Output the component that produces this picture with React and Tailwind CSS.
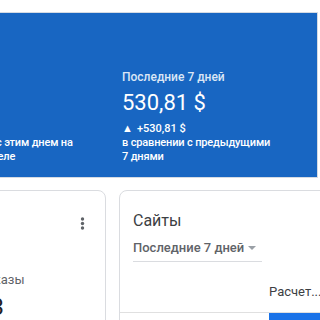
import React from 'react';

// Сводка доходов: синяя панель с периодами + карточки ниже
const FONT = { fontFamily: 'Roboto, "Noto Sans", Arial, sans-serif' };

function Period({ label, value, delta, note }) {
  return (
    <div className="w-[160px] shrink-0 pt-[56px] text-white">
      <div className="text-[12px] leading-[16px] font-medium text-[#dbe6f6]">{label}</div>
      <div className="mt-[4px] text-[22px] leading-[28px]">{value}</div>
      <div className="mt-[5px] text-[11px] leading-[14px] font-medium flex items-center gap-[4px]">
        <span className="text-[11px]">▲</span>
        <span>{delta}</span>
      </div>
      <div className="text-[11px] leading-[13.5px] font-medium tracking-[-0.15px] whitespace-nowrap">
        {note[0]}
        <br />
        {note[1]}
      </div>
    </div>
  );
}

function MoreIcon() {
  return (
    <svg width="5" height="13" viewBox="0 0 5 13" className="text-[#5f6368]">
      <circle cx="2.5" cy="2" r="1.7" fill="currentColor" />
      <circle cx="2.5" cy="6.5" r="1.7" fill="currentColor" />
      <circle cx="2.5" cy="11" r="1.7" fill="currentColor" />
    </svg>
  );
}

export default function App() {
  return (
    <div className="w-[320px] h-[320px] overflow-hidden bg-white pt-[12px]" style={FONT}>
      {/* синяя панель */}
      <div className="w-[318px] h-[166px] bg-[#1866c2] border border-l-0 border-[#d5dbe3] overflow-hidden">
        <div className="flex gap-[31px] -ml-[69px]">
          <Period label="Вчера" value="0,00 $" delta="+0,00 $" note={['в сравнении с этим днем на', 'прошлой неделе']} />
          <Period label="Последние 7 дней" value="530,81 $" delta="+530,81 $" note={['в сравнении с предыдущими', '7 днями']} />
        </div>
      </div>

      {/* карточки */}
      <div className="flex gap-[13px] mt-[12px]">
        <div className="w-[200px] h-[160px] shrink-0 -ml-[94px] border border-[#dadce0] rounded-lg">
          <div className="flex justify-end pr-[20px] pt-[26px]">
            <MoreIcon />
          </div>
          <div className="pl-[70px] pt-[42px]">
            <div className="text-[13px] leading-[16px] text-[#5f6368]">Показы</div>
            <div className="mt-[5px] text-[24px] leading-[28px] text-[#202124]">83</div>
          </div>
        </div>

        <div className="w-[300px] h-[160px] shrink-0 border border-[#dadce0] rounded-lg overflow-hidden">
          <div className="pl-[13px] pt-[20px]">
            <div className="text-[16px] leading-[20px] text-[#3c4043]">Сайты</div>
            <div className="mt-[9px] w-[129px] h-[22px] border-b border-[#dadce0] flex items-start justify-between pr-[6px]">
              <span className="text-[13px] leading-[16px] font-medium text-[#5f6368]">Последние 7 дней</span>
              <span className="mt-[6px] w-0 h-0 border-l-[4px] border-r-[4px] border-t-[4px] border-l-transparent border-r-transparent border-t-[#9aa0a6]" />
            </div>
          </div>
          <div className="pl-[149px] pt-[22px] h-[50px] text-[13px] leading-[16px] text-[#3c4043]">Расчет...</div>
          <div className="border-t border-[#e0e0e0] flex">
            <div className="w-[149px]" />
            <div className="flex-1 h-[20px] bg-[#1a73e8]" />
          </div>
        </div>
      </div>
    </div>
  );
}
